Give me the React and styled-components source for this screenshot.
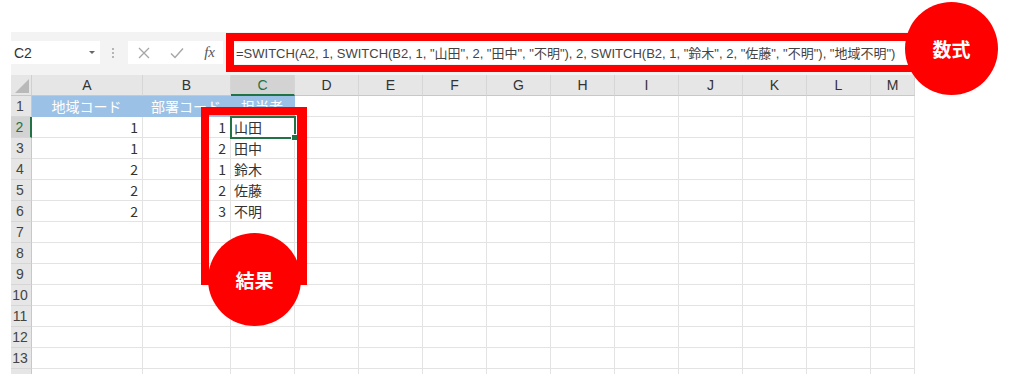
import styled, { createGlobalStyle } from 'styled-components';

const GlobalStyle = createGlobalStyle`
  html, body {
    margin: 0;
    padding: 0;
    background: #ffffff;
  }
  body {
    font-family: "Liberation Sans", "Noto Sans CJK JP", sans-serif;
  }
`;

const Page = styled.div`
  position: relative;
  width: 1024px;
  height: 387px;
  padding: 32px 0 0 11px;
  box-sizing: border-box;
  overflow: hidden;
`;

const Sheet = styled.div`
  width: 904px;
`;

const Toolbar = styled.div`
  height: 43px;
  background: #f3f3f3;
  display: flex;
  align-items: center;
  padding-bottom: 2px;
  box-sizing: border-box;
`;

const NameBox = styled.div`
  width: 89px;
  height: 23px;
  background: #fff;
  display: flex;
  align-items: center;
  justify-content: space-between;
  padding: 0 5px 0 3px;
  box-sizing: border-box;
  font-size: 14px;
  color: #333;
`;

const Caret = styled.span`
  width: 0;
  height: 0;
  border-left: 3px solid transparent;
  border-right: 3px solid transparent;
  border-top: 3px solid #666;
`;

const Dots = styled.span`
  width: 2px;
  margin: 0 14px 0 12px;
  display: flex;
  flex-direction: column;
  gap: 2px;
  span {
    width: 2px;
    height: 2px;
    background: #b5b5b5;
  }
`;

const ButtonBox = styled.div`
  width: 95px;
  height: 23px;
  background: #fff;
  display: flex;
  align-items: center;
  justify-content: space-between;
  padding: 0 8px 0 10px;
  box-sizing: border-box;
`;

const Fx = styled.span`
  font-family: "Liberation Serif", serif;
  font-style: italic;
  font-size: 15px;
  color: #555;
`;

const FormulaBox = styled.div`
  margin-left: 3px;
  width: 684px;
  height: 23px;
  background: #fff;
  padding-left: 10px;
  box-sizing: border-box;
  display: flex;
  align-items: center;
  font-size: 13px;
  color: #444;
  white-space: nowrap;
`;

const Grid = styled.div`
  display: grid;
  grid-template-columns: 21px 111px 88px 64px repeat(9, 64px) 44px;
  grid-auto-rows: 21px;
  height: 299px;
  overflow: hidden;
`;

const Corner = styled.div`
  background: #e6e6e6;
  border-right: 1px solid #d0d0d0;
  border-bottom: 1px solid #c8c8c8;
  box-sizing: border-box;
  position: relative;
  &::after {
    content: "";
    position: absolute;
    right: 2px;
    bottom: 2px;
    width: 0;
    height: 0;
    border-left: 14px solid transparent;
    border-bottom: 14px solid #b9b9b9;
  }
`;

const ColHead = styled.div`
  background: ${(p) => (p.$active ? '#d3d3d3' : '#e6e6e6')};
  color: ${(p) => (p.$active ? '#217346' : '#333')};
  border-right: 1px solid #d6d6d6;
  border-bottom: ${(p) => (p.$active ? '2px solid #217346' : '1px solid #c8c8c8')};
  box-sizing: border-box;
  font-size: 14px;
  display: flex;
  align-items: center;
  justify-content: center;
`;

const RowHead = styled.div`
  background: ${(p) => (p.$active ? '#d3d3d3' : '#e6e6e6')};
  color: ${(p) => (p.$active ? '#217346' : '#444')};
  border-right: ${(p) => (p.$active ? '2px solid #217346' : '1px solid #c8c8c8')};
  border-bottom: 1px solid #d6d6d6;
  box-sizing: border-box;
  font-size: 14px;
  display: flex;
  align-items: center;
  justify-content: center;
  padding-right: 2px;
`;

const Cell = styled.div`
  position: relative;
  background: ${(p) => p.$bg || '#fff'};
  color: ${(p) => (p.$bg ? '#fff' : '#333')};
  border-right: 1px solid ${(p) => p.$bg || '#e3e3e3'};
  border-bottom: 1px solid ${(p) => p.$bg || '#e3e3e3'};
  box-sizing: border-box;
  font-family: "Noto Sans CJK JP", sans-serif;
  font-size: 14px;
  line-height: 20px;
  display: flex;
  align-items: center;
  justify-content: ${(p) => p.$align || 'flex-start'};
  padding: 0 4px 0 3px;
  white-space: nowrap;
  overflow: visible;
  ${(p) => p.$selected && `
    outline: 2px solid #217346;
    outline-offset: -1px;
    z-index: 1;
  `}
`;

const Handle = styled.span`
  position: absolute;
  right: -4px;
  bottom: -4px;
  width: 5px;
  height: 5px;
  background: #217346;
  border: 1px solid #fff;
`;

const RedFrame = styled.div`
  position: absolute;
  left: ${(p) => p.$x}px;
  top: ${(p) => p.$y}px;
  width: ${(p) => p.$w}px;
  height: ${(p) => p.$h}px;
  border: solid #ff0000;
  border-width: ${(p) => p.$bw};
  box-sizing: border-box;
  z-index: 2;
`;

const Badge = styled.div`
  position: absolute;
  left: ${(p) => p.$x}px;
  top: ${(p) => p.$y}px;
  width: 93px;
  height: 93px;
  border-radius: 50%;
  background: #ff0000;
  color: #fff;
  font-family: "Noto Sans CJK JP", sans-serif;
  font-weight: bold;
  font-size: 19px;
  display: flex;
  align-items: center;
  justify-content: center;
  z-index: 3;
`;

const cols = [
  { l: 'A', align: 'flex-end' },
  { l: 'B', align: 'flex-end' },
  { l: 'C' },
  ...'DEFGHIJKL'.split('').map((l) => ({ l })),
  { l: 'M' },
];

const rows = [
  ['地域コード', '部署コード', '担当者'],
  ['1', '1', '山田'],
  ['1', '2', '田中'],
  ['2', '1', '鈴木'],
  ['2', '2', '佐藤'],
  ['2', '3', '不明'],
];

const formula =
  '=SWITCH(A2, 1, SWITCH(B2, 1, "山田", 2, "田中", "不明"), 2, SWITCH(B2, 1, "鈴木", 2, "佐藤", "不明"), "地域不明")';

const XIcon = () => (
  <svg width="12" height="12" viewBox="0 0 12 12">
    <path d="M1 1L11 11M11 1L1 11" stroke="#a6a6a6" strokeWidth="1.3" fill="none" />
  </svg>
);

const CheckIcon = () => (
  <svg width="14" height="12" viewBox="0 0 14 12">
    <path d="M1 6.5L5 10.5L13 1.5" stroke="#a6a6a6" strokeWidth="1.4" fill="none" />
  </svg>
);

export default function App() {
  const body = [];
  for (let r = 1; r <= 14; r++) {
    const data = rows[r - 1];
    body.push(
      <RowHead key={`h${r}`} $active={r === 2}>
        {r}
      </RowHead>
    );
    cols.forEach((c, i) => {
      const value = data && i < 3 ? data[i] : '';
      const isHead = r === 1 && i < 3;
      const selected = r === 2 && i === 2;
      body.push(
        <Cell
          key={`${c.l}${r}`}
          $bg={isHead ? '#9bc2e6' : undefined}
          $align={isHead ? 'center' : c.align}
          $selected={selected}
        >
          {value}
          {selected && <Handle />}
        </Cell>
      );
    });
  }

  return (
    <>
      <GlobalStyle />
      <Page>
        <Sheet>
          <Toolbar>
            <NameBox>
              C2
              <Caret />
            </NameBox>
            <Dots>
              <span />
              <span />
              <span />
            </Dots>
            <ButtonBox>
              <XIcon />
              <CheckIcon />
              <Fx>fx</Fx>
            </ButtonBox>
            <FormulaBox>{formula}</FormulaBox>
          </Toolbar>
          <Grid>
            <Corner />
            {cols.map((c) => (
              <ColHead key={c.l} $active={c.l === 'C'}>
                {c.l}
              </ColHead>
            ))}
            {body}
          </Grid>
        </Sheet>
        <RedFrame $x={226} $y={33} $w={690} $h={39} $bw="8px 0 7px 8px" />
        <RedFrame $x={201} $y={107} $w={106} $h={178} $bw="8px 10px 8px 8px" />
        <Badge $x={905} $y={2}>数式</Badge>
        <Badge $x={208} $y={233}>結果</Badge>
      </Page>
    </>
  );
}
